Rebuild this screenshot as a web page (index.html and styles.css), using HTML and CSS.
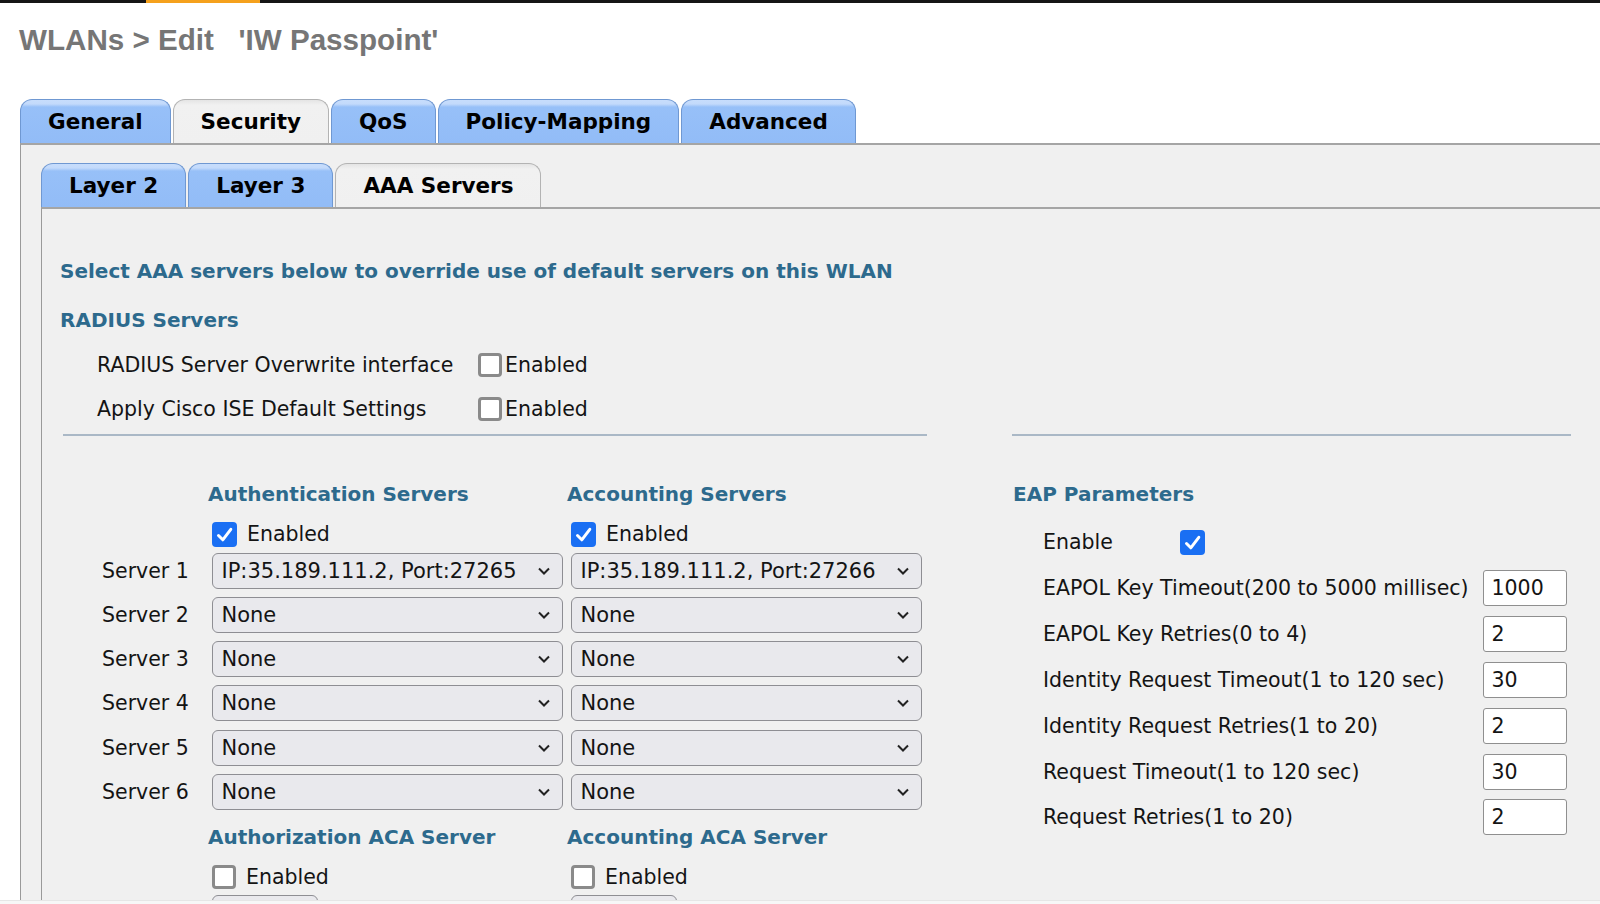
FILE: index.html
```html
<!DOCTYPE html>
<html>
<head>
<meta charset="utf-8">
<title>WLANs &gt; Edit</title>
<link rel="stylesheet" href="styles.css">
</head>
<body>
<div class="page">
  <div class="topbar"><span class="topbar-active"></span></div>
  <h1 class="title">WLANs &gt; Edit &nbsp;&nbsp;'IW Passpoint'</h1>
  <div class="tabs tabs-main">
    <div class="tab">General</div>
    <div class="tab active">Security</div>
    <div class="tab">QoS</div>
    <div class="tab">Policy-Mapping</div>
    <div class="tab">Advanced</div>
  </div>
  <div class="panel outer">
    <div class="tabs tabs-sub">
      <div class="tab">Layer 2</div>
      <div class="tab">Layer 3</div>
      <div class="tab active">AAA Servers</div>
    </div>
    <div class="panel inner">
      <div class="heading lead">Select AAA servers below to override use of default servers on this WLAN</div>
      <div class="heading sub">RADIUS Servers</div>
      <div class="radius-rows">
        <div class="radius-row">
          <span class="radius-label">RADIUS Server Overwrite interface</span>
          <span class="cb"></span><span class="tight">Enabled</span>
        </div>
        <div class="radius-row">
          <span class="radius-label">Apply Cisco ISE Default Settings</span>
          <span class="cb"></span><span class="tight">Enabled</span>
        </div>
      </div>

      <div class="split">
        <div class="col-servers">
          <div class="srow h">
            <span></span>
            <div class="heading colh">Authentication Servers</div>
            <div class="heading colh">Accounting Servers</div>
          </div>
          <div class="srow c">
            <span></span>
            <div class="chk"><span class="cb on"><svg viewBox="0 0 25 25" width="25" height="25"><path d="M6.5 13.5 L10.8 17.8 L18.8 7.3" fill="none" stroke="#fff" stroke-width="3" stroke-linecap="round" stroke-linejoin="round"/></svg></span>Enabled</div>
            <div class="chk"><span class="cb on"><svg viewBox="0 0 25 25" width="25" height="25"><path d="M6.5 13.5 L10.8 17.8 L18.8 7.3" fill="none" stroke="#fff" stroke-width="3" stroke-linecap="round" stroke-linejoin="round"/></svg></span>Enabled</div>
          </div>
          <div class="srow s first">
            <span class="slabel">Server 1</span>
            <div class="select"><span>IP:35.189.111.2, Port:27265</span><svg class="chev" viewBox="0 0 12 8" width="12" height="8"><path d="M1 1.5 L6 6.5 L11 1.5" fill="none" stroke="#222" stroke-width="2"/></svg></div>
            <div class="select"><span>IP:35.189.111.2, Port:27266</span><svg class="chev" viewBox="0 0 12 8" width="12" height="8"><path d="M1 1.5 L6 6.5 L11 1.5" fill="none" stroke="#222" stroke-width="2"/></svg></div>
          </div>
          <div class="srow s">
            <span class="slabel">Server 2</span>
            <div class="select"><span>None</span><svg class="chev" viewBox="0 0 12 8" width="12" height="8"><path d="M1 1.5 L6 6.5 L11 1.5" fill="none" stroke="#222" stroke-width="2"/></svg></div>
            <div class="select"><span>None</span><svg class="chev" viewBox="0 0 12 8" width="12" height="8"><path d="M1 1.5 L6 6.5 L11 1.5" fill="none" stroke="#222" stroke-width="2"/></svg></div>
          </div>
          <div class="srow s">
            <span class="slabel">Server 3</span>
            <div class="select"><span>None</span><svg class="chev" viewBox="0 0 12 8" width="12" height="8"><path d="M1 1.5 L6 6.5 L11 1.5" fill="none" stroke="#222" stroke-width="2"/></svg></div>
            <div class="select"><span>None</span><svg class="chev" viewBox="0 0 12 8" width="12" height="8"><path d="M1 1.5 L6 6.5 L11 1.5" fill="none" stroke="#222" stroke-width="2"/></svg></div>
          </div>
          <div class="srow s">
            <span class="slabel">Server 4</span>
            <div class="select"><span>None</span><svg class="chev" viewBox="0 0 12 8" width="12" height="8"><path d="M1 1.5 L6 6.5 L11 1.5" fill="none" stroke="#222" stroke-width="2"/></svg></div>
            <div class="select"><span>None</span><svg class="chev" viewBox="0 0 12 8" width="12" height="8"><path d="M1 1.5 L6 6.5 L11 1.5" fill="none" stroke="#222" stroke-width="2"/></svg></div>
          </div>
          <div class="srow s">
            <span class="slabel">Server 5</span>
            <div class="select"><span>None</span><svg class="chev" viewBox="0 0 12 8" width="12" height="8"><path d="M1 1.5 L6 6.5 L11 1.5" fill="none" stroke="#222" stroke-width="2"/></svg></div>
            <div class="select"><span>None</span><svg class="chev" viewBox="0 0 12 8" width="12" height="8"><path d="M1 1.5 L6 6.5 L11 1.5" fill="none" stroke="#222" stroke-width="2"/></svg></div>
          </div>
          <div class="srow s">
            <span class="slabel">Server 6</span>
            <div class="select"><span>None</span><svg class="chev" viewBox="0 0 12 8" width="12" height="8"><path d="M1 1.5 L6 6.5 L11 1.5" fill="none" stroke="#222" stroke-width="2"/></svg></div>
            <div class="select"><span>None</span><svg class="chev" viewBox="0 0 12 8" width="12" height="8"><path d="M1 1.5 L6 6.5 L11 1.5" fill="none" stroke="#222" stroke-width="2"/></svg></div>
          </div>
          <div class="srow h aca">
            <span></span>
            <div class="heading colh">Authorization ACA Server</div>
            <div class="heading colh">Accounting ACA Server</div>
          </div>
          <div class="srow c aca">
            <span></span>
            <div class="chk"><span class="cb"></span>Enabled</div>
            <div class="chk"><span class="cb"></span>Enabled</div>
          </div>
          <div class="srow p">
            <span></span>
            <div class="select short"></div>
            <div class="select short"></div>
          </div>
        </div>

        <div class="col-eap">
          <div class="heading">EAP Parameters</div>
          <div class="eap-enable">
            <span class="eap-enable-label">Enable</span>
            <span class="cb on"><svg viewBox="0 0 25 25" width="25" height="25"><path d="M6.5 13.5 L10.8 17.8 L18.8 7.3" fill="none" stroke="#fff" stroke-width="3" stroke-linecap="round" stroke-linejoin="round"/></svg></span>
          </div>
          <div class="eap-grid">
            <span>EAPOL Key Timeout(200 to 5000 millisec)</span><div class="input">1000</div>
            <span>EAPOL Key Retries(0 to 4)</span><div class="input">2</div>
            <span>Identity Request Timeout(1 to 120 sec)</span><div class="input">30</div>
            <span>Identity Request Retries(1 to 20)</span><div class="input">2</div>
            <span>Request Timeout(1 to 120 sec)</span><div class="input">30</div>
            <span>Request Retries(1 to 20)</span><div class="input">2</div>
          </div>
        </div>
      </div>
    </div>
  </div>
  <div class="footer-strip"></div>
</div>
</body>
</html>
```

FILE: styles.css
```css
* { box-sizing: border-box; }
html, body { margin: 0; padding: 0; }
body {
  background: #fff;
  font-family: "DejaVu Sans", Verdana, sans-serif;
  font-size: 20.5px;
  color: #141414;
}
.page {
  height: 904px;
  display: flex;
  flex-direction: column;
  overflow: hidden;
}
.topbar {
  flex: none;
  height: 3px;
  background: #151515;
  display: flex;
  padding-left: 146px;
}
.topbar-active {
  width: 114px;
  background: #f5a11c;
}
.title {
  flex: none;
  margin: 19.5px 0 0 19px;
  font: bold 29.6px/34px "Liberation Sans", Arial, sans-serif;
  color: #767676;
}
.tabs {
  flex: none;
  display: flex;
  gap: 2px;
}
.tabs-main { margin: 42.5px 0 0 20px; }
.tab {
  height: 44px;
  padding: 0 27px;
  border: 1px solid #6f98d2;
  border-bottom: none;
  border-radius: 12px 12px 0 0;
  background: linear-gradient(to bottom, #c7ddfc 0, #c3dafb 4px, #97c0f8 7px, #92bcf7 100%);
  font: bold 21.5px/43px "DejaVu Sans", Verdana, sans-serif;
  color: #000;
  white-space: nowrap;
}
.tab.active {
  border-color: #b3b3b3;
  background: linear-gradient(to bottom, #e4e4e4 0, #f1f1f1 5px, #f0f0f0 100%);
}
.panel {
  background: #f0f0f0;
  border-top: 2px solid #a5a5a5;
  border-left: 1px solid #9a9a9a;
}
.outer {
  flex: 1;
  min-height: 0;
  margin-left: 20px;
  padding: 18px 0 0 20px;
  display: flex;
  flex-direction: column;
}
.inner {
  flex: 1;
  min-height: 0;
  padding: 50px 0 0 18px;
}
.footer-strip {
  flex: none;
  height: 4px;
  background: #f7f7f7;
  border-top: 1px solid #e6e6e6;
}
.heading {
  font: bold 20px/24px "DejaVu Sans", Verdana, sans-serif;
  color: #2d6a8d;
  white-space: nowrap;
}
.sub { margin-top: 24.5px; }
.radius-rows {
  margin-top: 17.8px;
  padding-left: 37px;
  display: flex;
  flex-direction: column;
  gap: 11.9px;
}
.radius-row {
  height: 32px;
  display: flex;
  align-items: center;
}
.radius-label { width: 381px; }
.tight { margin-left: 3px; }

.cb {
  flex: none;
  width: 24px;
  height: 24px;
  border: 3px solid #8a8a8a;
  border-radius: 4px;
  background: #fff;
  display: inline-flex;
  align-items: center;
  justify-content: center;
}
.cb.on {
  width: 25px;
  height: 25px;
  border: none;
  background: #1a6ff3;
}
.cb svg { display: block; }

.split {
  display: flex;
  margin: 9px 0 0 3px;
}
.col-servers {
  width: 864px;
  border-top: 2px solid #aab8c6;
  padding: 46px 0 0 39px;
}
.col-eap {
  width: 559px;
  margin-left: 85px;
  border-top: 2px solid #aab8c6;
  padding: 46px 0 0 1px;
}
.srow {
  display: grid;
  grid-template-columns: 102px 351px 351px;
  column-gap: 8px;
  align-items: center;
}
.srow.h { height: 24px; }
.srow.c { height: 28px; margin-top: 14px; }
.srow.s { height: 36px; margin-top: 8.3px; }
.srow.s.first { margin-top: 4.4px; }
.srow.h.aca { margin-top: 15.1px; }
.srow.c.aca { margin-top: 13.5px; }
.srow.p { height: 36px; margin-top: 4.5px; align-items: start; }
.colh { margin-left: -4px; }
.chk {
  display: flex;
  align-items: center;
  gap: 10px;
}
.slabel { white-space: nowrap; }
.select {
  height: 36px;
  border: 1.5px solid #8e8e93;
  border-radius: 6px;
  background: #e9e9ed;
  display: flex;
  align-items: center;
  justify-content: space-between;
  padding: 0 12px 0 8.5px;
  font-size: 21px;
  white-space: nowrap;
}
.select.short { width: 106px; }
.chev { flex: none; display: block; }

.eap-enable {
  margin-top: 22px;
  height: 28px;
  display: flex;
  align-items: center;
  padding-left: 30px;
}
.eap-enable-label { width: 137px; }
.eap-grid {
  margin-top: 13.8px;
  padding-left: 30px;
  display: grid;
  grid-template-columns: 440px 84px;
  grid-auto-rows: 36px;
  row-gap: 9.9px;
  align-items: center;
  white-space: nowrap;
}
.input {
  height: 36px;
  border: 1.5px solid #8f8f8f;
  border-radius: 3px;
  background: #fff;
  padding-left: 7.5px;
  display: flex;
  align-items: center;
}
```
